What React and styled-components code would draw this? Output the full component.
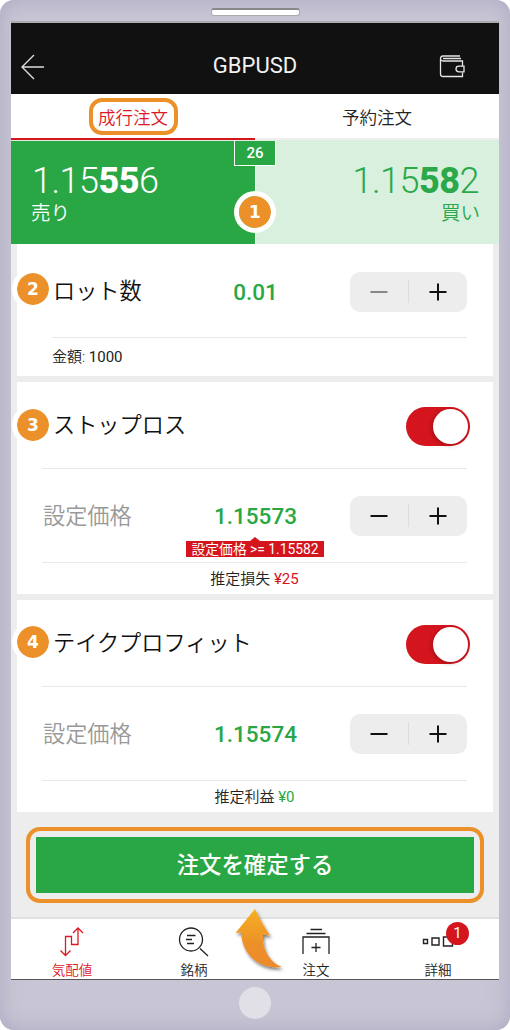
import styled, { createGlobalStyle } from "styled-components";

const GlobalStyle = createGlobalStyle`
  * {
    box-sizing: border-box;
  }
  body {
    margin: 0;
    background-color: #fff;
    font-family: Roboto, "Noto Sans CJK JP", sans-serif;
    color: #222;
  }
`;

const Phone = styled.div`
  display: flex;
  flex-direction: column;
  align-items: center;
  width: 510px;
  height: 1030px;
  border-radius: 14px;
  background-color: #c8c6d4;
  box-shadow: inset 0 0 22px #aaa8c0;
`;

const Speaker = styled.div`
  width: 89px;
  height: 8px;
  margin: 8px 0 5px;
  border: 1px solid #aaa;
  border-top: 2px solid #888;
  border-radius: 3px;
  background-color: #fff;
`;

const Screen = styled.div`
  position: relative;
  display: flex;
  flex-direction: column;
  width: 488px;
  height: 959px;
  border-top: 2px solid #adabb0;
  border-bottom: 1px solid #555;
  background-color: #ededed;
`;

const HomeButton = styled.div`
  width: 32px;
  height: 32px;
  margin-top: 7px;
  border-radius: 50%;
  background-color: #e1e0e6;
`;

const Header = styled.header`
  display: flex;
  align-items: center;
  justify-content: space-between;
  height: 71px;
  padding: 16px 34px 0 9px;
  background-color: #111;
  color: #f2f2f2;
`;

const Title = styled.h1`
  margin: 0;
  padding: 0 0 2px 26px;
  font-size: 22px;
  font-weight: 400;
  line-height: 26px;
`;

const Tabs = styled.div`
  display: flex;
  height: 46px;
  background-color: #fff;
`;

const Tab = styled.div`
  display: flex;
  flex: 1;
  align-items: center;
  justify-content: center;
  border-bottom: 2px solid ${(p) => (p.$active ? "#d4151e" : "#eee")};
  font-size: 17.5px;
  font-weight: 350;
  color: ${(p) => (p.$active ? "#dc1a26" : "#222")};
`;

const TabRing = styled.span`
  display: flex;
  align-items: center;
  justify-content: center;
  width: 89px;
  height: 37px;
  border: 4px solid #ec9029;
  border-radius: 13px;
`;

const Quotes = styled.div`
  position: relative;
  display: flex;
  height: 104px;
  border-top: 1px solid #dcefe0;
`;

const Quote = styled.div`
  flex: 1;
  padding: 19px 20px 0 21px;
  border-left: ${(p) => (p.$buy ? "1px solid #f4fbf5" : "0")};
  text-align: ${(p) => (p.$buy ? "right" : "left")};
  background-color: ${(p) => (p.$buy ? "#d8f0dd" : "#29a744")};
  color: ${(p) => (p.$buy ? "#2ba84a" : "#fff")};
`;

const Rate = styled.div`
  height: 43px;
  font-size: 36px;
  font-weight: 300;
  line-height: 42px;
  letter-spacing: -0.5px;

  b {
    font-weight: 800;
  }
`;

const Side = styled.div`
  margin: 0 -1px;
  font-size: 19.5px;
  font-weight: 350;
  line-height: 22px;
`;

const Spread = styled.div`
  position: absolute;
  top: 0;
  left: 223px;
  width: 42px;
  height: 25px;
  border: 1px solid #fff;
  border-top: 0;
  background-color: #29a744;
  color: #fff;
  font-size: 15px;
  font-weight: 500;
  line-height: 24px;
  text-align: center;
`;

const Step = styled.span`
  position: absolute;
  top: ${(p) => p.$top}px;
  left: ${(p) => p.$left}px;
  width: 42px;
  height: 42px;
  border: 5px solid #fff;
  border-radius: 50%;
  background-color: #ec9029;
  background-clip: padding-box;
  color: #fff;
  font-family: "DejaVu Sans", sans-serif;
  font-size: 17px;
  font-weight: 700;
  line-height: 33px;
  text-align: center;
`;

const Card = styled.section`
  position: relative;
  height: ${(p) => p.$height}px;
  margin: 0 6px 6px;
  padding: 0 26px 0 25px;
  background-color: #fff;
`;

const Row = styled.div`
  display: grid;
  grid-template-columns: 1fr auto;
  align-items: center;
  height: ${(p) => p.$height}px;
  margin-left: ${(p) => p.$inset || 0}px;
  padding-top: ${(p) => p.$drop || 0}px;
  border-bottom: 1px solid #e9e9e9;
`;

const PriceRow = styled(Row)`
  grid-template-columns: ${(p) => 135 - (p.$inset || 0)}px 1fr auto;
`;

const Name = styled.span`
  font-size: 22.2px;
  font-weight: 350;
  line-height: 30px;
  padding-left: ${(p) => p.$pad || 1}px;
  padding-bottom: ${(p) => (p.$muted ? 0 : 2)}px;
  color: ${(p) => (p.$muted ? "#999" : "#111")};
`;

const Value = styled.span`
  padding-right: 16px;
  color: #29a744;
  font-size: 22.5px;
  font-weight: 500;
  line-height: 26px;
  text-align: center;
`;

const Note = styled.div`
  font-size: 15px;
  font-weight: 350;
  line-height: ${(p) => p.$line}px;
  padding-left: ${(p) => (p.$left ? 10 : 0)}px;
  text-align: ${(p) => (p.$left ? "left" : "center")};

  em {
    font-style: normal;
    font-weight: 400;
    color: ${(p) => p.$color || "inherit"};
  }
`;

const Warning = styled.div`
  position: absolute;
  top: 159px;
  left: 169px;
  width: 138px;
  height: 16px;
  background-color: #d4151e;
  color: #fff;
  font-size: 13.8px;
  line-height: 16px;
  text-align: center;
  white-space: nowrap;

  &::before {
    content: "";
    position: absolute;
    top: -4px;
    left: 64px;
    border: solid transparent;
    border-width: 0 5px 4px;
    border-bottom-color: #d4151e;
  }
`;

const StepperBox = styled.div`
  display: flex;
  align-items: center;
  width: 117px;
  height: 40px;
  border-radius: 10px;
  background-color: #ededed;
`;

const StepperButton = styled.button`
  display: flex;
  flex: 1;
  align-items: center;
  justify-content: center;
  height: 23px;
  padding: 0;
  border: 0;
  background: none;
  color: ${(p) => (p.$off ? "#888" : "#111")};

  & + & {
    border-left: 1px solid #ddd;
  }
`;

const Toggle = styled.div`
  display: flex;
  justify-content: flex-end;
  width: 64px;
  height: 39px;
  margin-right: -3px;
  padding: 2px;
  border-radius: 20px;
  background-color: #d4151e;

  &::after {
    content: "";
    width: 35px;
    height: 35px;
    border-radius: 50%;
    background-color: #fff;
    box-shadow: -1px 1px 4px rgba(60, 0, 0, 0.35);
  }
`;

const SubmitRing = styled.div`
  height: 76px;
  margin: 9px 15px 0;
  padding: 6px;
  border: 4px solid #ec9029;
  border-radius: 14px;
`;

const Submit = styled.button`
  display: block;
  width: 438px;
  height: 56px;
  padding: 0;
  border: 0;
  background-color: #29a744;
  color: #fff;
  font-family: inherit;
  font-size: 22.4px;
  font-weight: 500;
  line-height: 56px;
`;

const Nav = styled.nav`
  display: flex;
  height: 62px;
  margin-top: auto;
  border-top: 2px solid #e0e0e0;
  background-color: #fff;
`;

const NavItem = styled.div`
  position: relative;
  display: flex;
  flex: 1;
  flex-direction: column;
  align-items: center;
  padding-top: 7px;
  color: ${(p) => (p.$active ? "#dc1a26" : "#222")};
  font-size: 13.5px;
  font-weight: 350;
  line-height: 18px;

  svg {
    flex: none;
    margin-bottom: 3px;
  }
`;

const Count = styled.span`
  position: absolute;
  top: 3px;
  left: 69px;
  width: 23px;
  height: 23px;
  border-radius: 50%;
  background-color: #d4151e;
  color: #fff;
  font-size: 15px;
  font-weight: 400;
  line-height: 23px;
  text-align: center;
`;

const Pointer = styled.svg`
  position: absolute;
  top: 883px;
  left: 219px;
`;

const Stepper = ({ off }) => (
  <StepperBox>
    <StepperButton $off={off}>
      <svg width="18" height="18" stroke="currentColor" strokeWidth="2">
        <path d="M0.5 9H17.5" />
      </svg>
    </StepperButton>
    <StepperButton>
      <svg width="18" height="18" stroke="currentColor" strokeWidth="2">
        <path d="M0.5 9H17.5M9 0.5V17.5" />
      </svg>
    </StepperButton>
  </StepperBox>
);

const BackIcon = () => (
  <svg width="25" height="28" fill="none" stroke="#ddd" strokeWidth="1.4">
    <path d="M14 2L2 14L14 26M2 14H24" />
  </svg>
);

const WalletIcon = () => (
  <svg width="26" height="26" fill="none" stroke="#e6e6e6" strokeWidth="1.3">
    <path d="M21 2H4Q1.5 2 1.5 4.5V20Q1.5 22.5 4 22.5H23.5V18.5M23.5 12V7H4Q1.5 7 1.5 4.5M4 4.5H22" />
    <path d="M25 12.2H20Q17 12.2 17 15T20 17.8H25Z" />
  </svg>
);

const QuotesIcon = () => (
  <svg width="40" height="32" fill="none" stroke="currentColor" strokeWidth="1.3">
    <path d="M13.5 29V10.5H19.5V18.5H26V2M8.5 24.5L13.5 29.5L18.5 24.5M21 7L26 2L31 7" />
  </svg>
);

const SymbolsIcon = () => (
  <svg width="40" height="32" fill="none" stroke="currentColor" strokeWidth="1.3">
    <circle cx="17" cy="13.5" r="11.5" />
    <path d="M26 22.5L34 30M13 9.5H21.5M12 13.5H18M13 17.5H20" />
  </svg>
);

const OrderIcon = () => (
  <svg width="40" height="32" fill="none" stroke="currentColor" strokeWidth="1.3">
    <path d="M14.5 3.5H26M10.5 7.5H29.5M7 28V11H33V28M20 17V26M15.5 21.5H24.5" />
  </svg>
);

const MoreIcon = () => (
  <svg width="40" height="32" fill="none" stroke="currentColor" strokeWidth="1.4">
    <path d="M5.5 13.5H9.5V17.5H5.5ZM14 12H21V19H14ZM25.5 11H34.5V20H25.5Z" />
  </svg>
);

const App = () => {
  return (
    <>
      <GlobalStyle />
      <Phone>
        <Speaker />
        <Screen>
          <Header>
            <BackIcon />
            <Title>GBPUSD</Title>
            <WalletIcon />
          </Header>
          <Tabs>
            <Tab $active>
              <TabRing>成行注文</TabRing>
            </Tab>
            <Tab>予約注文</Tab>
          </Tabs>
          <Quotes>
            <Quote>
              <Rate>
                1.15<b>55</b>6
              </Rate>
              <Side>売り</Side>
            </Quote>
            <Quote $buy>
              <Rate>
                1.15<b>58</b>2
              </Rate>
              <Side>買い</Side>
            </Quote>
            <Spread>26</Spread>
            <Step $top={50} $left={223}>1</Step>
          </Quotes>

          <Card $height={132}>
            <Step $top={24} $left={-5}>2</Step>
            <PriceRow $height={94} $inset={10} $drop={2}>
              <Name>ロット数</Name>
              <Value>0.01</Value>
              <Stepper off />
            </PriceRow>
            <Note $left $line={38}>
              金額: <em>1000</em>
            </Note>
          </Card>

          <Card $height={212}>
            <Step $top={22} $left={-5}>3</Step>
            <Row $height={87} $drop={2}>
              <Name $pad={11}>ストップロス</Name>
              <Toggle />
            </Row>
            <PriceRow $height={94}>
              <Name $muted>設定価格</Name>
              <Value>1.15573</Value>
              <Stepper />
            </PriceRow>
            <Warning>設定価格 &gt;= 1.15582</Warning>
            <Note $line={32} $color="#d4151e">
              推定損失 <em>¥25</em>
            </Note>
          </Card>

          <Card $height={212}>
            <Step $top={21} $left={-5}>4</Step>
            <Row $height={87} $drop={2}>
              <Name $pad={11}>テイクプロフィット</Name>
              <Toggle />
            </Row>
            <PriceRow $height={94}>
              <Name $muted>設定価格</Name>
              <Value>1.15574</Value>
              <Stepper />
            </PriceRow>
            <Note $line={32} $color="#29a744">
              推定利益 <em>¥0</em>
            </Note>
          </Card>

          <SubmitRing>
            <Submit>注文を確定する</Submit>
          </SubmitRing>

          <Nav>
            <NavItem $active>
              <QuotesIcon />
              気配値
            </NavItem>
            <NavItem>
              <SymbolsIcon />
              銘柄
            </NavItem>
            <NavItem>
              <OrderIcon />
              注文
            </NavItem>
            <NavItem>
              <MoreIcon />
              詳細
              <Count>1</Count>
            </NavItem>
          </Nav>

          <Pointer width="64" height="72">
            <defs>
              <linearGradient id="flame" x1="0" y1="0" x2="0" y2="1">
                <stop offset="0" stopColor="#f6b023" />
                <stop offset="0.6" stopColor="#ec9029" />
                <stop offset="1" stopColor="#ec8a29" />
              </linearGradient>
              <filter id="drop" x="-20%" y="-20%" width="150%" height="150%">
                <feDropShadow dx="1.5" dy="2.5" stdDeviation="1.5" floodOpacity="0.5" />
              </filter>
            </defs>
            <path
              d="M25 3Q16 14 5.5 27L11 26.5C12 47 27 64 52 61C40 57 31.5 43 33 28.5L40 29.5Q32 18 25 3Z"
              fill="url(#flame)"
              filter="url(#drop)"
            />
          </Pointer>
        </Screen>
        <HomeButton />
      </Phone>
    </>
  );
};

export default App;
